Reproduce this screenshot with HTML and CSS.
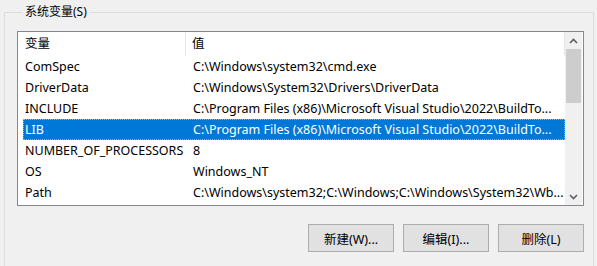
FILE: index.html
```html
<!DOCTYPE html>
<html lang="zh-CN">
<head>
    <meta charset="UTF-8">
    <title>系统变量</title>
    <link rel="stylesheet" href="styles.css">
</head>
<body>
    <fieldset class="group">
        <legend class="group-title">系统变量(S)</legend>

        <div class="listbox">
            <div class="list-main">
                <div class="list-header">
                    <div class="header-cell name-head">变量</div>
                    <div class="header-cell value-head">值</div>
                </div>
                <div class="list-rows">
                    <div class="row"><span class="cell">ComSpec</span><span class="cell">C:\Windows\system32\cmd.exe</span></div>
                    <div class="row"><span class="cell">DriverData</span><span class="cell">C:\Windows\System32\Drivers\DriverData</span></div>
                    <div class="row"><span class="cell">INCLUDE</span><span class="cell">C:\Program Files (x86)\Microsoft Visual Studio\2022\BuildTo...</span></div>
                    <div class="row selected"><span class="cell">LIB</span><span class="cell">C:\Program Files (x86)\Microsoft Visual Studio\2022\BuildTo...</span></div>
                    <div class="row"><span class="cell">NUMBER_OF_PROCESSORS</span><span class="cell">8</span></div>
                    <div class="row"><span class="cell">OS</span><span class="cell">Windows_NT</span></div>
                    <div class="row"><span class="cell">Path</span><span class="cell">C:\Windows\system32;C:\Windows;C:\Windows\System32\Wb...</span></div>
                </div>
            </div>
            <div class="scrollbar">
                <div class="scroll-btn">
                    <svg width="9" height="6" viewBox="0 0 9 6"><path d="M1 5 L4.5 1.5 L8 5" fill="none" stroke="#606060" stroke-width="1.6"/></svg>
                </div>
                <div class="scroll-track">
                    <div class="scroll-thumb"></div>
                </div>
                <div class="scroll-btn">
                    <svg width="9" height="6" viewBox="0 0 9 6"><path d="M1 1 L4.5 4.5 L8 1" fill="none" stroke="#606060" stroke-width="1.6"/></svg>
                </div>
            </div>
        </div>

        <div class="buttons">
            <button class="btn">新建(W)...</button>
            <button class="btn">编辑(I)...</button>
            <button class="btn">删除(L)</button>
        </div>
    </fieldset>
</body>
</html>
```

FILE: styles.css
```css
html {
    overflow: hidden;
}

body {
    margin: 0;
    background-color: #f0f0f0;
    font-family: "Noto Sans", "Noto Sans CJK SC", sans-serif;
    font-size: 12.5px;
    color: #000;
    height: 266px;
    overflow: hidden;
}

.group {
    margin: 4px 3px 0 4px;
    padding: 11px 9px 14px 12px;
    border: 1px solid #dcdcdc;
    border-bottom: none;
    min-width: 0;
}

.group-title {
    padding: 0 3px;
    margin-left: 5px;
    line-height: 16px;
    font-size: 12px;
}

.listbox {
    box-sizing: border-box;
    height: 175px;
    border: 1px solid #828790;
    background-color: #fff;
    display: flex;
    overflow: hidden;
}

.list-main {
    flex: 1;
    min-width: 0;
    overflow: hidden;
}

.list-header {
    display: grid;
    grid-template-columns: 168px 1fr;
    height: 24px;
}

.header-cell {
    line-height: 24px;
    border-right: 1px solid #e5e5e5;
}

.name-head {
    padding-left: 7px;
}

.value-head {
    padding-left: 6px;
}

.list-rows {
    padding-left: 5px;
}

.row {
    box-sizing: border-box;
    display: grid;
    grid-template-columns: 168px 1fr;
    height: 21px;
    line-height: 21px;
    white-space: nowrap;
}

.cell {
    padding-left: 2px;
    overflow: hidden;
}

.row.selected {
    background-color: #0078d7;
    color: #fff;
    outline: 1px dotted #f39a3c;
    outline-offset: -1px;
}

.scrollbar {
    width: 17px;
    margin-right: 1px;
    background-color: #f0f0f0;
    display: flex;
    flex-direction: column;
}

.scroll-btn {
    height: 17px;
    display: flex;
    align-items: center;
    justify-content: center;
}

.scroll-track {
    flex: 1;
    padding: 0 1px;
}

.scroll-thumb {
    height: 54px;
    background-color: #cdcdcd;
}

.buttons {
    display: flex;
    justify-content: flex-end;
    gap: 9px;
    margin-top: 18px;
}

.btn {
    box-sizing: border-box;
    width: 86px;
    height: 28px;
    background-color: #e1e1e1;
    border: 1px solid #adadad;
    border-radius: 0;
    font-family: inherit;
    font-size: 12.5px;
    color: #000;
    padding: 0;
}
```
